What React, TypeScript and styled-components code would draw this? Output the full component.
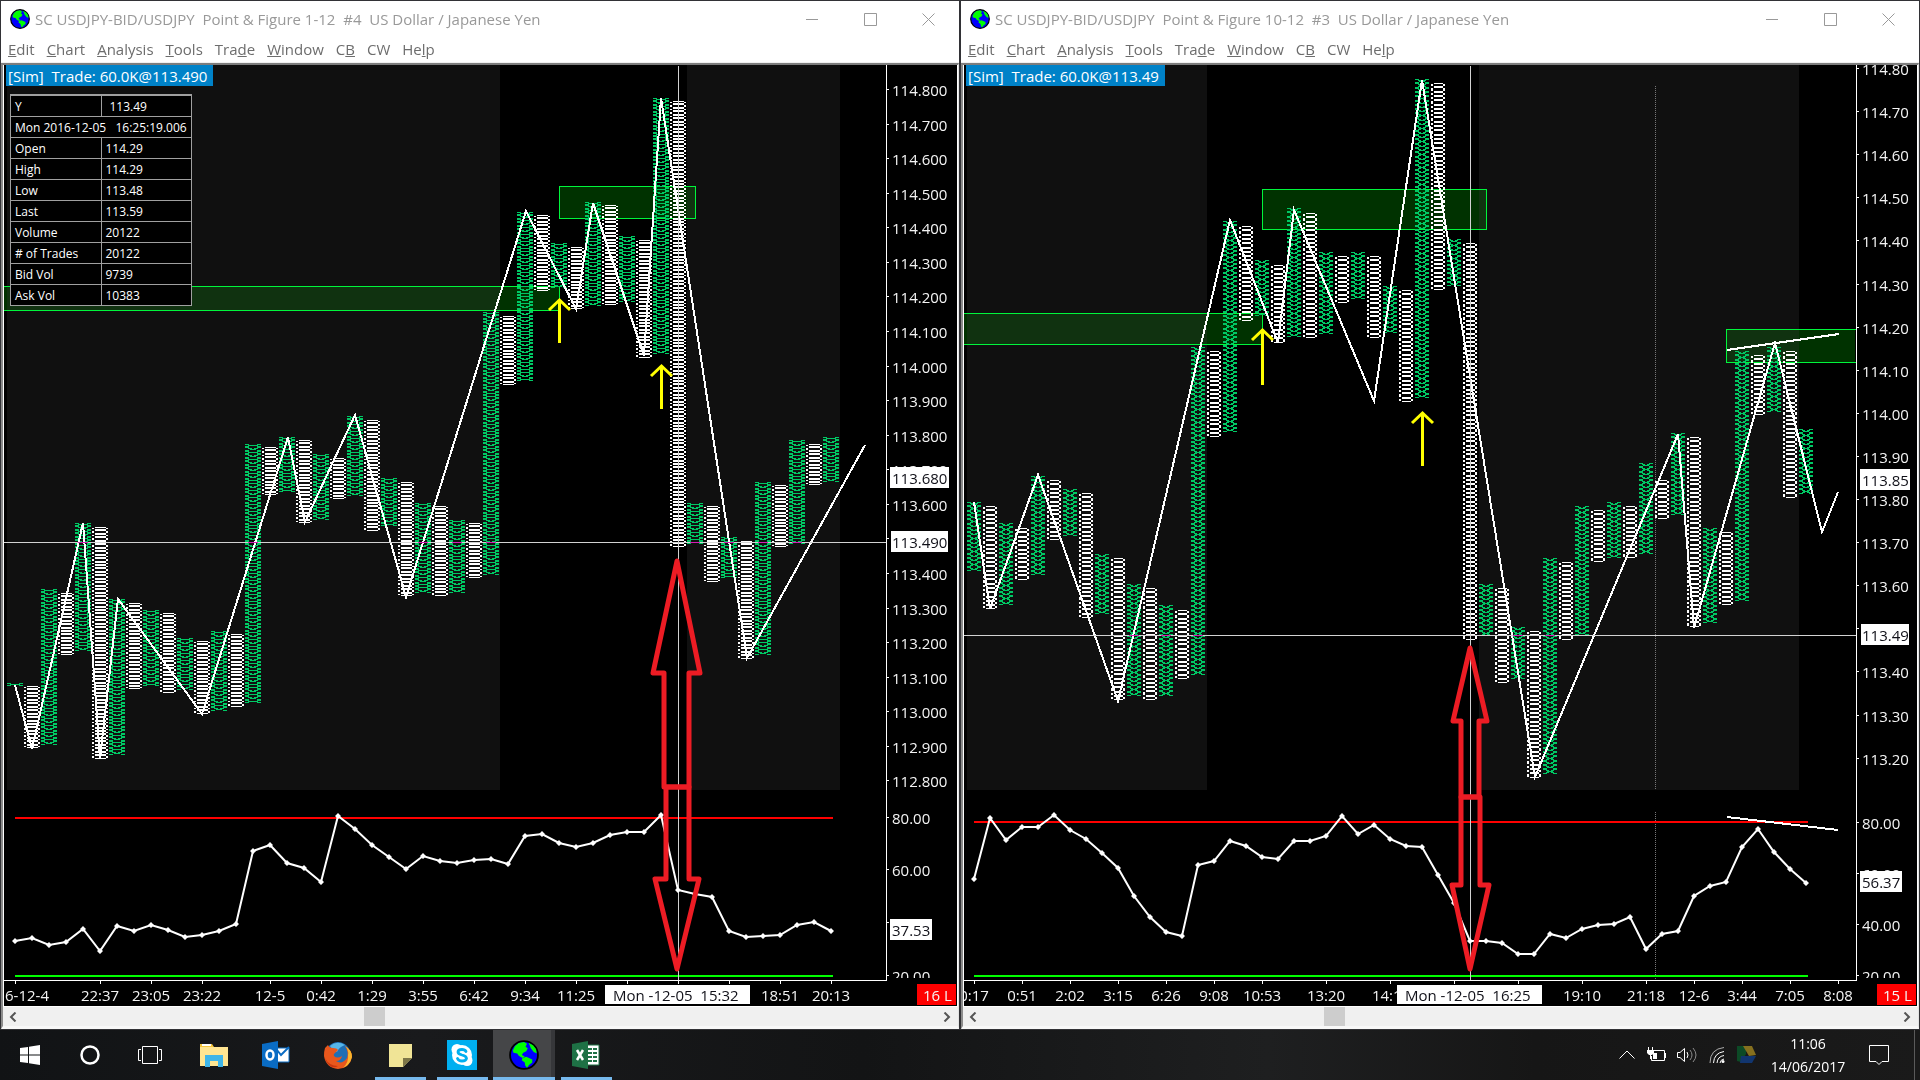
import React from "react";
import styled, { createGlobalStyle } from "styled-components";

const FONT = `"Open Sans", "Noto Sans", "Liberation Sans", sans-serif`;

const GlobalStyle = createGlobalStyle`
  *, *::before, *::after { box-sizing: border-box; }
  html, body { margin: 0; background: #101113; }
  body { font-family: ${FONT}; font-size: 15px; }
  button { font: inherit; color: inherit; background: none; border: 0; padding: 0; }
`;

/* ---------- types and data ---------- */

type Pt = [number, number];
type Span = [number, number];

interface ChartData {
  id: string;
  title: string;
  sim: string;
  box: number;
  pitch: number;
  first: number;
  halfWidth: number;
  axisX: number;
  columns: Span[];
  zigzag: Pt[];
  osc: number[];
  shades: Span[];
  zones: { x1: number; x2: number; y1: number; y2: number; openLeft?: boolean; openRight?: boolean }[];
  prices: { y: number; label: string }[];
  priceTags: { x: number; y: number; w: number; h: number; label: string; base: number }[];
  levels: { y: number; label: string }[];
  unlabelled: string[];
  oscTag: { y: number; label: string };
  highLevel: number;
  levelEnd: number;
  ticks: number[];
  times: { x: number; label: string; start?: boolean }[];
  timeTag: { x: number; label: string };
  count: string;
  crossX: number;
  crossY: number;
  arrows: { x: number; y1: number; y2: number }[];
  bigArrows: string[];
  trends: [Pt, Pt][];
  divider?: number;
  thumb: string;
}

const priceScale = (top: number, from: number, step: number, n: number, digits: number) =>
  Array.from({ length: n }, (_, i) => ({ y: top + step * i, label: (from - i / 10).toFixed(digits) }));

const LEFT: ChartData = {
  id: "left",
  title: "SC USDJPY-BID/USDJPY  Point & Figure 1-12  #4  US Dollar / Japanese Yen",
  sim: "[Sim]  Trade: 60.0K@113.490",
  box: 3.457,
  pitch: 17,
  first: 15,
  halfWidth: 8,
  axisX: 886,
  columns: [
    [683, 686], [686, 748], [589, 746], [593, 655], [523, 651], [527, 759], [599, 756], [603, 689],
    [610, 687], [613, 693], [638, 690], [641, 714], [631, 711], [634, 707], [444, 704], [447, 496],
    [437, 493], [440, 523], [454, 521], [458, 499], [416, 497], [420, 530], [478, 528], [482, 596],
    [503, 593], [506, 596], [520, 594], [523, 579], [312, 576], [316, 385], [212, 383], [215, 292],
    [243, 288], [247, 309], [202, 306], [205, 305], [236, 303], [240, 357], [98, 355], [101, 548],
    [503, 545], [506, 582], [537, 580], [541, 659], [482, 656], [485, 548], [440, 545], [444, 485],
    [437, 483],
  ],
  zigzag: [
    [15, 685], [32, 749], [83, 523], [100, 758], [118, 599], [202, 714], [288, 437], [305, 522],
    [355, 415], [406, 597], [526, 211], [576, 309], [593, 203], [644, 356], [661, 98], [747, 658],
    [865, 445],
  ],
  osc: [
    941, 938, 945, 942, 929, 951, 926, 931, 925, 930, 937, 935, 931, 924, 851, 845, 863, 868, 882,
    816, 829, 845, 857, 869, 856, 861, 863, 860, 859, 864, 836, 834, 843, 847, 843, 835, 832, 832,
    815, 890, 894, 897, 931, 937, 936, 935, 925, 922, 931,
  ],
  shades: [[7, 500], [687, 840]],
  zones: [
    { x1: 4, x2: 559, y1: 286, y2: 310, openLeft: true },
    { x1: 559, x2: 695, y1: 186, y2: 218 },
  ],
  prices: priceScale(90, 114.8, 34.57, 21, 3),
  priceTags: [
    { x: 890, y: 467, w: 59, h: 21, label: "113.680", base: 484 },
    { x: 891, y: 531, w: 57, h: 21, label: "113.490", base: 548 },
  ],
  levels: [
    { y: 818, label: "80.00" }, { y: 870, label: "60.00" }, { y: 923, label: "40.00" }, { y: 976, label: "20.00" },
  ],
  unlabelled: ["113.500", "40.00"],
  oscTag: { y: 919, label: "37.53" },
  highLevel: 818,
  levelEnd: 833,
  ticks: [15, 100, 151, 202, 270, 321, 372, 423, 474, 525, 576, 627, 678, 729, 780, 831],
  times: [
    { x: 5, label: "6-12-4", start: true }, { x: 100, label: "22:37" }, { x: 151, label: "23:05" },
    { x: 202, label: "23:22" }, { x: 270, label: "12-5" }, { x: 321, label: "0:42" }, { x: 372, label: "1:29" },
    { x: 423, label: "3:55" }, { x: 474, label: "6:42" }, { x: 525, label: "9:34" }, { x: 576, label: "11:25" },
    { x: 780, label: "18:51" }, { x: 831, label: "20:13" },
  ],
  timeTag: { x: 605, label: "Mon -12-05  15:32" },
  count: "16 L",
  crossX: 678,
  crossY: 542,
  arrows: [{ x: 559, y1: 299, y2: 343 }, { x: 661, y1: 365, y2: 409 }],
  bigArrows: [
    "M677 561L653 673H664V787H689V673H700Z",
    "M666 787H689V879H699L677 969L655 879H666Z",
  ],
  trends: [],
  thumb: "37.4%",
};

const RIGHT: ChartData = {
  id: "right",
  title: "SC USDJPY-BID/USDJPY  Point & Figure 10-12  #3  US Dollar / Japanese Yen",
  sim: "[Sim]  Trade: 60.0K@113.49",
  box: 4.31,
  pitch: 16,
  first: 14,
  halfWidth: 7,
  axisX: 896,
  columns: [
    [502, 572], [506, 610], [523, 606], [528, 579], [476, 576], [480, 541], [489, 537], [493, 618],
    [554, 615], [558, 700], [584, 697], [588, 700], [605, 697], [610, 679], [347, 675], [351, 437],
    [221, 434], [226, 321], [260, 317], [265, 342], [208, 339], [213, 338], [252, 335], [256, 303],
    [252, 300], [256, 338], [286, 335], [290, 403], [79, 399], [83, 290], [239, 287], [243, 640],
    [584, 635], [588, 683], [627, 679], [631, 778], [558, 775], [562, 640], [506, 635], [510, 562],
    [502, 559], [506, 558], [463, 555], [480, 519], [433, 515], [437, 627], [528, 624], [532, 605],
    [351, 602], [355, 416], [347, 412], [351, 498], [429, 493],
  ],
  zigzag: [
    [14, 502], [30, 609], [78, 475], [158, 701], [270, 220], [318, 343], [334, 210], [414, 401],
    [462, 80], [575, 777], [718, 434], [734, 628], [815, 343], [862, 532], [878, 492],
  ],
  osc: [
    879, 818, 840, 827, 827, 815, 830, 839, 853, 868, 896, 917, 932, 936, 865, 861, 841, 846, 857,
    859, 841, 841, 836, 816, 834, 825, 839, 846, 847, 875, 903, 941, 941, 943, 954, 954, 934, 938,
    929, 925, 924, 917, 949, 934, 931, 896, 886, 882, 847, 829, 852, 869, 883,
  ],
  shades: [[7, 247], [519, 839]],
  zones: [
    { x1: 4, x2: 302, y1: 313, y2: 344, openLeft: true },
    { x1: 302, x2: 526, y1: 189, y2: 229 },
    { x1: 766, x2: 895, y1: 329, y2: 362, openRight: true },
  ],
  prices: priceScale(69, 114.8, 43.1, 17, 2),
  priceTags: [
    { x: 900, y: 469, w: 50, h: 21, label: "113.85", base: 486 },
    { x: 901, y: 624, w: 48, h: 21, label: "113.49", base: 641 },
  ],
  levels: [
    { y: 823, label: "80.00" }, { y: 874, label: "60.00" }, { y: 925, label: "40.00" }, { y: 976, label: "20.00" },
  ],
  unlabelled: ["113.50"],
  oscTag: { y: 871, label: "56.37" },
  highLevel: 822,
  levelEnd: 848,
  ticks: [14, 62, 110, 158, 206, 254, 302, 366, 430, 494, 558, 622, 686, 734, 782, 830, 878],
  times: [
    { x: 14, label: "0:17" }, { x: 62, label: "0:51" }, { x: 110, label: "2:02" }, { x: 158, label: "3:15" },
    { x: 206, label: "6:26" }, { x: 254, label: "9:08" }, { x: 302, label: "10:53" }, { x: 366, label: "13:20" },
    { x: 431, label: "14:15" }, { x: 622, label: "19:10" }, { x: 686, label: "21:18" }, { x: 734, label: "12-6" },
    { x: 782, label: "3:44" }, { x: 830, label: "7:05" }, { x: 878, label: "8:08" },
  ],
  timeTag: { x: 437, label: "Mon -12-05  16:25" },
  count: "15 L",
  crossX: 510,
  crossY: 635,
  arrows: [{ x: 302, y1: 329, y2: 385 }, { x: 462, y1: 412, y2: 466 }],
  bigArrows: [
    "M510 648L493 721H501V797H519V721H527Z",
    "M501 797H520V885H529L510 969L492 885H501Z",
  ],
  trends: [[[767, 350], [879, 334]], [[767, 817], [878, 830]]],
  divider: 695,
  thumb: "37.4%",
};

const READOUT: [string, string][] = [
  ["Open", "114.29"], ["High", "114.29"], ["Low", "113.48"], ["Last", "113.59"],
  ["Volume", "20122"], ["# of Trades", "20122"], ["Bid Vol", "9739"], ["Ask Vol", "10383"],
];

const MENUS: [string, string, string][] = [
  ["", "E", "dit"], ["", "C", "hart"], ["", "A", "nalysis"], ["", "T", "ools"], ["Tra", "d", "e"],
  ["", "W", "indow"], ["C", "B", ""], ["CW", "", ""], ["He", "l", "p"],
];

/* ---------- point and figure glyph rows ---------- */

function columnPath(d: ChartData, k: number) {
  const [top, bottom] = d.columns[k];
  const cx = d.first + d.pitch * k;
  const w = d.halfWidth;
  const rising = k % 2 === 0;
  const n = Math.max(1, Math.round((bottom - top) / d.box));
  let path = "";
  const row = (a: number, b: number, y: number) => {
    path += `M${cx + a} ${y}.5H${cx + b}`;
  };
  for (let i = 0; i < n; i++) {
    const y0 = Math.round(top + i * d.box);
    const y1 = Math.round(top + (i + 1) * d.box);
    const h = y1 - y0;
    for (let r = 0; r < h; r++) {
      const edge = Math.min(r, h - 1 - r);
      const y = y0 + r;
      if (rising) {
        if (edge === 0) {
          row(-w, 4 - w, y);
          row(w - 4, w, y);
        } else if (r === 1 && h === 3) {
          row(-5, 5, y);
        } else if (edge === 1 && (h === 5 || r === 1)) {
          row(3 - w, -1, y);
          row(1, w - 3, y);
        } else row(-3, 3, y);
      } else if (edge === 0) row(3 - w, w - 2, y);
      else {
        row(-w, 2 - w, y);
        row(w - 2, w, y);
      }
    }
  }
  return path;
}

/* ---------- chart drawing ---------- */

const Plot = styled.svg`
  display: block;
  width: 100%;
  height: auto;
  background: #000;
  font-family: ${FONT};
  font-size: 15px;
`;
const Zone = styled.rect`
  fill: #003200;
  mix-blend-mode: lighten;
`;
const AxisText = styled.text<{ $dark?: boolean }>`
  fill: ${(p) => (p.$dark ? "#101018" : "#f4f4f4")};
  white-space: pre;
`;
const Ink = styled.path<{ $c: string; $w?: number }>`
  fill: none;
  stroke: ${(p) => p.$c};
  stroke-width: ${(p) => p.$w ?? 1};
`;

const poly = (pts: Pt[]) => "M" + pts.map((p) => p.join(" ")).join("L");

function Chart({ d }: { d: ChartData }) {
  const labelX = d.axisX + 6;
  const falling = d.columns.map((_, k) => (k % 2 ? columnPath(d, k) : "")).join("");
  const rising = d.columns.map((_, k) => (k % 2 ? "" : columnPath(d, k))).join("");
  const oscPts: Pt[] = d.osc.map((y, k) => [d.first + d.pitch * k, y]);
  const crossed = d.columns
    .map((c, k) => (k % 2 === 0 && c[0] < d.crossY && c[1] > d.crossY ? `M${d.first + d.pitch * k - 5} ${d.crossY + 0.5}h10` : ""))
    .join("");
  return (
    <Plot viewBox="4 65 953 941" role="img" aria-label={d.title}>
      <defs>
        <clipPath id={`${d.id}-osc`}>
          <rect x="4" y="65" width="953" height="913" />
        </clipPath>
      </defs>
      <g shapeRendering="crispEdges">
        {d.shades.map(([a, b]) => (
          <rect key={a} x={a} y="65" width={b - a} height="725" fill="#101010" />
        ))}
        {d.divider && <Ink $c="#787878" strokeDasharray="1 1" d={`M${d.divider + 0.5} 86V790M${d.divider + 0.5} 812V979`} />}
        {d.zones.map((z) => (
          <g key={z.y1}>
            <Zone x={z.x1} y={z.y1} width={z.x2 - z.x1} height={z.y2 - z.y1} />
            <Ink
              $c="#00f53c"
              d={`M${z.x1} ${z.y1 + 0.5}H${z.x2 + 1}M${z.x1} ${z.y2 + 0.5}H${z.x2 + 1}${z.openRight ? "" : `M${z.x2 + 0.5} ${z.y1}V${z.y2}`}${z.openLeft ? "" : `M${z.x1 + 0.5} ${z.y1}V${z.y2}`}`}
            />
          </g>
        ))}
        <Ink $c="#00c864" d={rising} />
        <Ink $c="#fff" d={falling} />
        <Ink $c="#fff" $w={2} d={poly(d.zigzag)} />
        <Ink $c="#ff0000" $w={2} d={`M${d.first} ${d.highLevel}H${d.levelEnd}`} />
        <Ink $c="#00ff00" $w={2} d={`M${d.first} 976H${d.levelEnd}`} />
        {d.trends.map((t) => (
          <Ink key={t[0][1]} $c="#fff" $w={2} d={poly(t)} />
        ))}
        <Ink $c="#d2d2d2" d={`M4 ${d.crossY + 0.5}H${d.axisX}M${d.crossX + 0.5} 66V980`} />
        <Ink $c="#d41eb4" d={crossed} />
      </g>
      <Ink $c="#fff" $w={2} d={poly(oscPts)} />
      <path fill="#fff" d={oscPts.map(([x, y]) => `M${x} ${y - 3}l3 3l-3 3l-3 -3z`).join("")} />
      {d.arrows.map((a) => (
        <Ink
          key={a.x}
          $c="#ffff00"
          $w={3}
          d={`M${a.x + 0.5} ${a.y2}V${a.y1 + 1}M${a.x - 10} ${a.y1 + 11}L${a.x + 0.5} ${a.y1 + 1}L${a.x + 11} ${a.y1 + 11}`}
        />
      ))}
      {d.bigArrows.map((p) => (
        <Ink key={p} $c="#ed1c24" $w={5} strokeLinejoin="round" d={p} />
      ))}
      <Ink
        $c="#fff"
        shapeRendering="crispEdges"
        d={`M${d.axisX + 0.5} 65V981M4 980.5H${d.axisX}${[...d.prices, ...d.levels].map((p) => `M${d.axisX} ${Math.round(p.y) - 0.5}h3`).join("")}${d.ticks.map((x) => `M${x + 0.5} 981v3`).join("")}`}
      />
      <g clipPath={`url(#${d.id}-osc)`}>
        {[...d.prices, ...d.levels].filter((p) => !d.unlabelled.includes(p.label)).map((p) => (
          <AxisText key={p.label} x={labelX} y={Math.round(p.y) + 6}>{p.label}</AxisText>
        ))}
      </g>
      {d.priceTags.map((t) => (
        <g key={t.label}>
          <rect x={t.x} y={t.y} width={t.w} height={t.h} fill="#fff" />
          <AxisText $dark x={labelX} y={t.base}>{t.label}</AxisText>
        </g>
      ))}
      <rect x={d.axisX + 4} y={d.oscTag.y} width="42" height="21" fill="#fff" />
      <AxisText $dark x={labelX} y={d.oscTag.y + 17}>{d.oscTag.label}</AxisText>
      {d.times.map((t) => (
        <AxisText key={t.label} x={t.x} y="1001" textAnchor={t.start ? "start" : "middle"}>{t.label}</AxisText>
      ))}
      <rect x={d.timeTag.x} y="985" width="145" height="19" fill="#fff" />
      <AxisText $dark x={d.timeTag.x + 8} y="1001">{d.timeTag.label}</AxisText>
      <rect x="917" y="984" width="39" height="21" fill="#ff0000" />
      <AxisText x="923" y="1001">{d.count}</AxisText>
    </Plot>
  );
}

/* ---------- window chrome ---------- */

const Desktop = styled.div`
  display: flex;
  flex-direction: column;
  min-height: 100vh;
`;
const Windows = styled.main`
  display: grid;
  grid-template-columns: 1fr 1fr;
`;
const Win = styled.section`
  min-width: 0;
  border: 1px solid #323236;
  background: #fff;
`;
const TitleBar = styled.header`
  display: flex;
  align-items: center;
  height: 36px;
  padding: 0 2px 0 9px;
  color: #999;
`;
const Title = styled.h1`
  flex: 1;
  min-width: 0;
  margin: 0 0 0 5px;
  overflow: hidden;
  font-size: 15px;
  font-weight: 400;
  line-height: 24px;
  white-space: pre;
`;
const Control = styled.button`
  display: grid;
  place-items: center;
  width: 58px;
  height: 36px;
`;
const MenuBar = styled.nav`
  display: flex;
  gap: 12px;
  height: 26px;
  padding-left: 7px;
  color: #6d6d6d;
  line-height: 25px;
  border-bottom: 1px solid #f0f0f0;
`;
const Frame = styled.div`
  border-style: solid;
  border-width: 2px 1px 3px 2px;
  border-color: #7d7d7d #e3e3e3 #f8f8f8 #8c8c8c;
`;
const Canvas = styled.div`
  position: relative;
  border-left: 1px solid #fff;
  border-right: 1px solid #fff;
`;
const SimBadge = styled.div`
  position: absolute;
  top: 0;
  left: 2px;
  padding: 1px 6px 0 2px;
  background: #0082c8;
  color: #fff;
  line-height: 20px;
  white-space: pre;
`;
const Readout = styled.table`
  position: absolute;
  top: 29px;
  left: 6px;
  width: 182px;
  table-layout: fixed;
  border-collapse: collapse;
  border: 1px solid #fff;
  border-top: 2px solid #a0a0a0;
  border-left-color: #a0a0a0;
  background: #000;
  color: #fff;
  font-size: 12px;
  line-height: 18px;
`;
const Cell = styled.td<{ $indent?: boolean }>`
  height: 21px;
  padding: 2px 0 0 ${(p) => (p.$indent ? "8px" : "4px")};
  border: 1px solid #a0a0a0;
  overflow: hidden;
  text-align: left;
  font-weight: 400;
  white-space: pre;
`;
const ScrollRow = styled.div`
  display: flex;
  height: 20px;
  padding-right: 2px;
  border-top: 1px solid #fff;
  background: #f0f0f0;
`;
const ScrollButton = styled.button`
  display: grid;
  place-items: center;
  width: 19px;
`;
const Track = styled.div`
  flex: 1;
`;
const Thumb = styled.div<{ $at: string }>`
  width: 21px;
  height: 19px;
  margin-left: ${(p) => p.$at};
  background: #cdcdcd;
`;

function Globe({ size }: { size: number }) {
  return (
    <svg width={size} height={size} viewBox="0 0 20 20" aria-hidden="true">
      <circle cx="10" cy="10" r="9.3" fill="#0000ff" stroke="#000" strokeWidth="1.2" />
      <path fill="#00ff00" d="M2.500 7L4 4L6.500 2L10 1.300L12 2.500L11 4.500L12.500 5.500L11.500 7.500L9.500 8.500L8.500 10L10.500 11L9 12L6.500 10.500L5.500 9L3 8.500Z" />
      <path fill="#00ff00" d="M13 1.800L16 3.500L18 6L18.500 9L16.500 8L14.500 5.500L14 4Z" />
      <path fill="#00ff00" d="M9 12L11.500 11.200L15.500 13L15.500 15L13.500 16.500L12 18.500L10.800 17L10.500 15L8.500 13.500Z" />
    </svg>
  );
}

function ChartWindow({ d, children }: { d: ChartData; children?: React.ReactNode }) {
  return (
    <Win>
      <TitleBar>
        <Globe size={20} />
        <Title>{d.title}</Title>
        <Control aria-label="Minimize">
          <svg width="13" height="13"><Ink $c="#999" d="M0 6.500H12" /></svg>
        </Control>
        <Control aria-label="Maximize">
          <svg width="13" height="13"><Ink $c="#999" d="M.5 .5H12.500V12.500H.5Z" /></svg>
        </Control>
        <Control aria-label="Close">
          <svg width="13" height="13"><Ink $c="#999" d="M.5 .5L12.500 12.500M12.500 .5L.5 12.500" /></svg>
        </Control>
      </TitleBar>
      <MenuBar>
        {MENUS.map(([a, u, b]) => (
          <button key={a + u + b}>{a}{u && <u>{u}</u>}{b}</button>
        ))}
      </MenuBar>
      <Frame>
        <Canvas>
          <Chart d={d} />
          <SimBadge>{d.sim}</SimBadge>
          {children}
        </Canvas>
        <ScrollRow>
          <ScrollButton aria-label="Scroll left">
            <svg width="8" height="10"><Ink $c="#555" $w={2} d="M6.500 .5L2 5L6.500 9.500" /></svg>
          </ScrollButton>
          <Track><Thumb $at={d.thumb} /></Track>
          <ScrollButton aria-label="Scroll right">
            <svg width="8" height="10"><Ink $c="#555" $w={2} d="M1.500 .5L6 5L1.500 9.500" /></svg>
          </ScrollButton>
        </ScrollRow>
      </Frame>
    </Win>
  );
}

/* ---------- taskbar ---------- */

const Taskbar = styled.footer`
  display: flex;
  flex: 1;
  min-height: 50px;
  background: linear-gradient(90deg, #111315 0%, #191a1c 22%, #131415 45%, #1e1f20 66%, #161616 80%, #1a1a1a 100%);
  color: #fff;
`;
const Launchers = styled.div`
  display: flex;
`;
const SysButton = styled.button`
  display: grid;
  place-items: center;
  width: 60px;
`;
const Tasks = styled.div`
  display: flex;
  margin-left: 3px;
`;
const Task = styled.button<{ $open?: boolean; $active?: boolean }>`
  position: relative;
  display: grid;
  place-items: center;
  width: 62px;
  background: ${(p) => (p.$active ? "#454648" : "none")};
  box-shadow: ${(p) => (p.$active ? "inset -4px 0 0 #36373a" : "none")};
  &::after {
    content: "";
    position: absolute;
    right: ${(p) => (p.$active ? "0" : "5px")};
    bottom: 0;
    left: ${(p) => (p.$active ? "0" : "6px")};
    height: 3px;
    background: ${(p) => (p.$open ? "#76b9ed" : "none")};
  }
`;
const Tray = styled.div`
  display: flex;
  align-items: center;
  gap: 10px;
  margin-left: auto;
`;
const TrayButton = styled.button`
  display: grid;
  place-items: center;
  width: 20px;
  height: 40px;
`;
const Clock = styled.time`
  width: 82px;
  font-size: 14px;
  line-height: 23px;
  text-align: center;
`;
const Notices = styled.button`
  display: grid;
  place-items: center;
  width: 40px;
  height: 40px;
`;
const PeekEdge = styled.div`
  align-self: stretch;
  width: 6px;
  margin-left: 5px;
  border-left: 1px solid #5a5a5a;
`;

const ExplorerIcon = () => (
  <svg width="28" height="24" viewBox="0 0 28 24">
    <path fill="#f5c63c" d="M0 1h12l2 3h13v4H0z" />
    <path fill="#fff" d="M2 1h9v2H2z" />
    <path fill="#ffe591" d="M0 4h28v19H0z" />
    <path fill="#3fb5e8" d="M5 12h18v12h-5v-6h-8v6H5z" />
  </svg>
);
const OutlookIcon = () => (
  <svg width="28" height="28" viewBox="0 0 28 28">
    <path fill="#fff" stroke="#0a6cc4" strokeWidth="1" d="M14 7h13v14H14z" />
    <path fill="none" stroke="#0a6cc4" strokeWidth="2" d="M15 9l4 5l8-8" />
    <path fill="#0a6cc4" d="M0 3L16 0V28L0 25z" />
    <ellipse cx="8" cy="14" rx="3.500" ry="4.500" fill="none" stroke="#fff" strokeWidth="2.500" />
  </svg>
);
const FirefoxIcon = () => (
  <svg width="28" height="28" viewBox="0 0 28 28">
    <circle cx="14" cy="13" r="12" fill="#1f6fb5" />
    <path fill="#56b5e8" d="M6 5Q13-1 21 4Q15 6 13 11Q9 10 6 5z" />
    <path fill="#e8571c" d="M1 7L4 4Q5 7 9 7Q13 7 14 9L11 12Q9 13 10 15Q13 18 18 15Q17 20 12 20Q18 24 23 17Q25 11 21 5Q28 9 28 16Q26 27 14 28Q2 27 0 15Q0 10 1 7z" />
    <path fill="#f9b52c" d="M21 5Q28 9 28 16Q26 24 19 27Q25 21 24 14Q25 9 21 5z" />
    <path fill="#c8370f" d="M1 17Q5 25 14 25Q9 28 5 24Q2 21 1 17z" />
  </svg>
);
const NoteIcon = () => (
  <svg width="23" height="23" viewBox="0 0 23 23">
    <path fill="#f0e496" d="M0 0h23v14l-9 9H0z" />
    <path fill="#7d7648" d="M14 14h9l-9 9z" />
  </svg>
);
const SkypeIcon = () => (
  <svg width="30" height="30" viewBox="0 0 30 30">
    <path fill="#00aff0" d="M0 0h30v30H0z" />
    <circle cx="15" cy="15" r="10" fill="#fff" />
    <circle cx="10" cy="9.500" r="5.500" fill="#fff" />
    <circle cx="20" cy="20.500" r="5.500" fill="#fff" />
    <path fill="none" stroke="#00aff0" strokeWidth="2.800" strokeLinecap="round" d="M19 11.500Q18 9.500 15 9.500Q11 9.500 11 12Q11 14 15 15Q19.500 16 19.500 18.500Q19 21 15 21Q11.500 21 10.500 18.500" />
  </svg>
);
const ExcelIcon = () => (
  <svg width="28" height="28" viewBox="0 0 28 28">
    <path fill="#fff" stroke="#1e7145" strokeWidth="1" d="M14 4h13v20H14z" />
    <path stroke="#1e7145" strokeWidth="2" strokeDasharray="4 1" d="M16 8h10M16 12h10M16 16h10M16 20h10" />
    <path fill="#1e7145" d="M0 3L16 0V28L0 25z" />
    <path stroke="#fff" strokeWidth="2.500" d="M5 9l6 10M11 9L5 19" />
  </svg>
);

export default function App() {
  return (
    <Desktop>
      <GlobalStyle />
      <Windows>
        <ChartWindow d={LEFT}>
          <Readout>
            <tbody>
              <tr><Cell as="th" scope="row">Y</Cell><Cell $indent>113.49</Cell></tr>
              <tr><Cell colSpan={2}>Mon 2016-12-05   16:25:19.006</Cell></tr>
              {READOUT.map(([name, value]) => (
                <tr key={name}><Cell as="th" scope="row">{name}</Cell><Cell>{value}</Cell></tr>
              ))}
            </tbody>
          </Readout>
        </ChartWindow>
        <ChartWindow d={RIGHT} />
      </Windows>
      <Taskbar>
        <Launchers>
          <SysButton aria-label="Start">
            <svg width="20" height="20" viewBox="0 0 20 20" fill="#fff"><path d="M0 3L8 2V9.500H0zM9 1.800L20 0V9.500H9zM0 10.500H8V18L0 17zM9 10.500H20V20L9 18.200z" /></svg>
          </SysButton>
          <SysButton aria-label="Search">
            <svg width="20" height="20"><circle cx="10" cy="10" r="8.500" fill="none" stroke="#fff" strokeWidth="2.500" /></svg>
          </SysButton>
          <SysButton aria-label="Task view">
            <svg width="24" height="18"><Ink $c="#fff" d="M4.500 .5H19.500V17.500H4.500ZM3 3.500H.5V14.500H3M21 3.500H23.500V14.500H21" /></svg>
          </SysButton>
        </Launchers>
        <Tasks>
          <Task aria-label="File Explorer"><ExplorerIcon /></Task>
          <Task aria-label="Outlook"><OutlookIcon /></Task>
          <Task aria-label="Firefox"><FirefoxIcon /></Task>
          <Task $open aria-label="Sticky Notes"><NoteIcon /></Task>
          <Task $open aria-label="Skype"><SkypeIcon /></Task>
          <Task $open $active aria-label="Sierra Chart"><Globe size={30} /></Task>
          <Task $open aria-label="Excel"><ExcelIcon /></Task>
        </Tasks>
        <Tray>
          <TrayButton aria-label="Show hidden icons">
            <svg width="16" height="10"><Ink $c="#fff" d="M.5 8.500L8 1L15.500 8.500" /></svg>
          </TrayButton>
          <TrayButton aria-label="Battery">
            <svg width="20" height="16">
              <Ink $c="#fff" d="M5 3.500H17.500V13.500H4.500V9M18.500 6V11M1.500 0V3M5.500 0V3M3.500 7V12" />
              <path fill="#fff" d="M0 3h7v3l-2 2H2L0 6zM6 6h4v6H6z" />
            </svg>
          </TrayButton>
          <TrayButton aria-label="Volume">
            <svg width="20" height="18">
              <Ink $c="#fff" d="M.5 6.500H3L7.500 2.500V15.500L3 11.500H.5Z M10 6Q12 9 10 12" />
              <Ink $c="#8c8c8c" d="M13 4Q17 9 13 14M16 2Q22 9 16 16" />
            </svg>
          </TrayButton>
          <TrayButton aria-label="Network">
            <svg width="16" height="16">
              <Ink $c="#aaa" d="M1 16Q1 2 15 .5" />
              <Ink $c="#fff" d="M4.500 16Q5 6 15 4.500M8 16Q8.500 9.500 15 8.500M11 16Q11.500 12.500 15 12" />
              <circle cx="14" cy="14.500" r="1.500" fill="#fff" />
            </svg>
          </TrayButton>
          <TrayButton aria-label="Drive">
            <svg width="20" height="20">
              <path fill="#0c4a26" d="M0 1h9v8L4 17L0 16z" />
              <path fill="#86701f" d="M6 1h9l4 9l-7 1z" />
              <path fill="#11356f" d="M4 11h15l-4 7H3z" />
            </svg>
          </TrayButton>
          <Clock>11:06<br />14/06/2017</Clock>
          <Notices aria-label="Notifications">
            <svg width="20" height="20"><Ink $c="#fff" d="M.5 .5H19.500V16.500H13L10 19.500L7 16.500H.5Z" /></svg>
          </Notices>
          <PeekEdge />
        </Tray>
      </Taskbar>
    </Desktop>
  );
}
